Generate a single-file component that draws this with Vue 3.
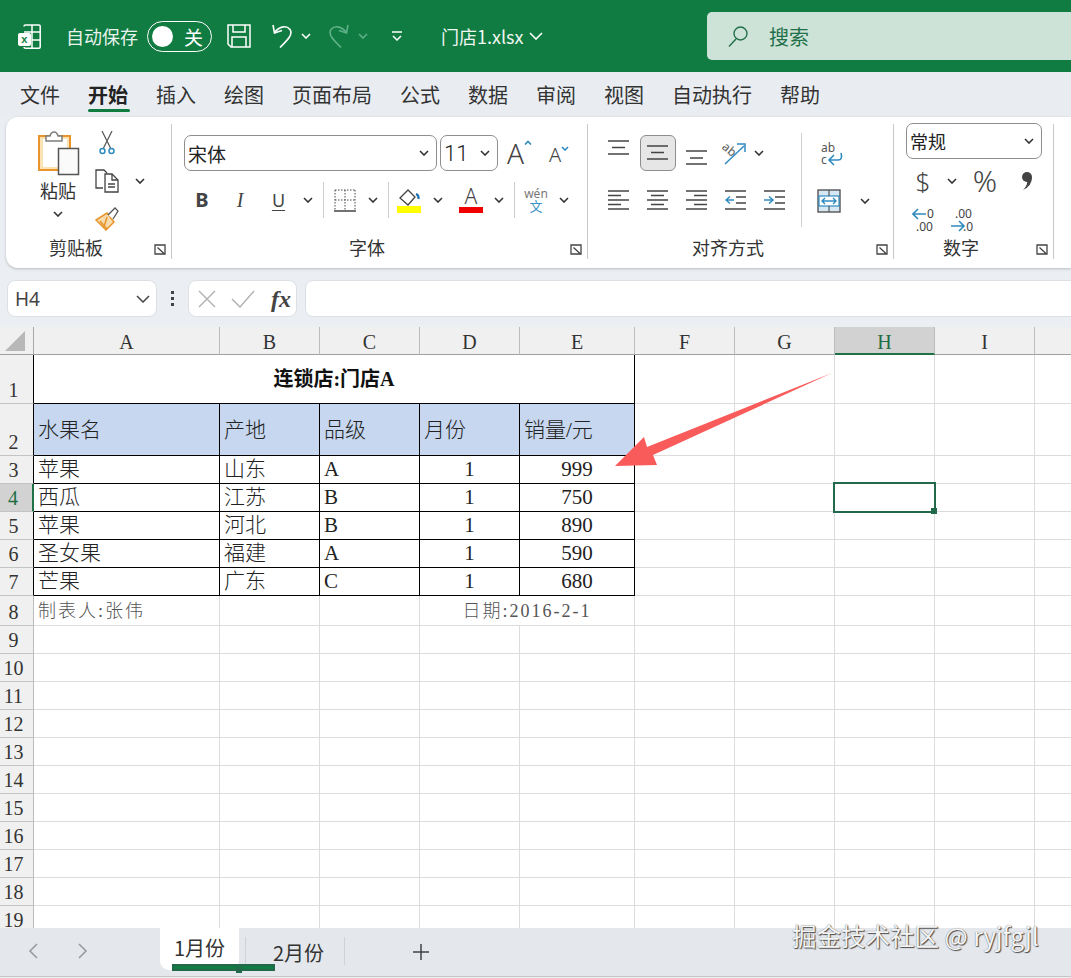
<script setup>
const cols = ['A', 'B', 'C', 'D', 'E', 'F', 'G', 'H', 'I', 'J']
const tabs = ['文件', '开始', '插入', '绘图', '页面布局', '公式', '数据', '审阅', '视图', '自动执行', '帮助']
const blank = (n, active) => Array.from({ length: n }, (_, i) => ({ t: '', c: active && i === 2 ? 'active' : '' }))
const line = (a, b, c, d, e) => [
  { t: a, c: 'b' }, { t: b, c: 'b' }, { t: c, c: 'b' },
  { t: d, c: 'b num' }, { t: e, c: 'b num' }
]
const head = ['水果名', '产地', '品级', '月份', '销量/元'].map(t => ({ t, c: 'b hd' }))
const rows = [
  { n: 1, dark: true, cells: [{ t: '连锁店:门店A', c: 'b title span5' }, ...blank(5)] },
  { n: 2, dark: true, cells: [...head, ...blank(5)] },
  { n: 3, dark: true, cells: [...line('苹果', '山东', 'A', '1', '999'), ...blank(5)] },
  { n: 4, dark: true, sel: true, cells: [...line('西瓜', '江苏', 'B', '1', '750'), ...blank(5, true)] },
  { n: 5, dark: true, cells: [...line('苹果', '河北', 'B', '1', '890'), ...blank(5)] },
  { n: 6, dark: true, cells: [...line('圣女果', '福建', 'A', '1', '590'), ...blank(5)] },
  { n: 7, dark: true, cells: [...line('芒果', '广东', 'C', '1', '680'), ...blank(5)] },
  { n: 8, cells: [{ t: '制表人:张伟', c: 'note' }, { t: '', c: '' }, { t: '', c: '' }, { t: '日期:2016-2-1', c: 'note span2 mid' }, ...blank(5)] },
  ...Array.from({ length: 11 }, (_, i) => ({ n: 9 + i, cells: blank(10) }))
]
</script>

<template>
  <div class="app">
    <header class="titlebar">
      <svg class="logo" viewBox="0 0 23 25" fill="none" stroke="#fff" stroke-width="1.5">
        <path d="M6 2.5Q6 1 7.5 1H21q1.2 0 1.2 1.2V23q0 1.2-1.2 1.2H7.5Q6 24.200 6 23" />
        <path d="M14 1v23M14 8h8M14 16h8M6 8h8" />
        <rect x="0" y="9" width="13" height="13" rx="2" fill="#fff" stroke="none" />
        <text x="3.300" y="19" class="logo-x">x</text>
      </svg>
      <span class="autosave">自动保存</span>
      <div class="toggle"><i class="knob"></i><span>关</span></div>
      <svg class="save" viewBox="0 0 24 24" fill="none" stroke="#fff" stroke-width="1.500">
        <path d="M1 1h22v22H4l-3-3z" /><path d="M6 1v7h12V1M5 23v-10h14v10" />
      </svg>
      <svg class="undo" viewBox="0 0 22 24" fill="none" stroke="#fff" stroke-width="1.600">
        <path d="M2 1l1.500 8L11 6.500" /><path d="M3.500 9C7 3 15 .5 19 5.500c3.500 5-3 11-10 18" />
      </svg>
      <svg class="qchev" viewBox="0 0 10 6" fill="none" stroke="#fff" stroke-width="1.600"><path d="M1 1l4 4 4-4" /></svg>
      <svg class="undo" viewBox="0 0 22 24" fill="none" stroke="#5fb088" stroke-width="1.600">
        <path d="M20 1l-1.500 8L11 6.500" /><path d="M18.500 9C15 3 7 .5 3 5.500c-3.500 5 3 11 10 18" />
      </svg>
      <svg class="qchev" viewBox="0 0 10 6" fill="none" stroke="#5fb088" stroke-width="1.600"><path d="M1 1l4 4 4-4" /></svg>
      <svg class="quick" viewBox="0 0 12 10" fill="none" stroke="#fff" stroke-width="1.500"><path d="M1 1h10M2 5l4 4 4-4" /></svg>
      <span class="fname">门店1.xlsx</span>
      <svg class="fchev" viewBox="0 0 14 8" fill="none" stroke="#fff" stroke-width="1.600"><path d="M1 1l6 6 6-6" /></svg>
      <div class="search">
        <svg viewBox="0 0 20 21" fill="none" stroke="#22704a" stroke-width="1.400"><circle cx="12.500" cy="7.500" r="6.500" /><path d="M8 13L1 20.500" /></svg>
        <span>搜索</span>
      </div>
    </header>

    <nav class="tabs">
      <span v-for="t in tabs" :key="t" class="tab" :class="{ on: t === '开始' }">{{ t }}</span>
    </nav>

    <section class="ribbon">
      <div class="group g-clip">
        <div class="body clip">
          <div class="paste">
            <svg viewBox="0 0 44 46" class="paste-ic">
              <rect x="3" y="6" width="31" height="34" fill="#fbe3b6" stroke="#e8942a" stroke-width="2" />
              <rect x="7" y="9" width="24" height="28" fill="#fff" />
              <path d="M10 11V6h4q1-4 4-4t4 4h4v5z" fill="#fff" stroke="#7d7d7d" stroke-width="1.500" />
              <rect x="22.500" y="18.500" width="20" height="26" fill="#fafafa" stroke="#555" stroke-width="1.500" />
            </svg>
            <span class="paste-t">粘贴</span>
            <svg class="chev" viewBox="0 0 10 6"><path d="M1 1l4 4 4-4" /></svg>
          </div>
          <svg class="ic scissors" viewBox="0 0 16 24" fill="none">
            <path d="M3 0l8.500 17M13 0L4.500 17" stroke="#555" stroke-width="1.200" />
            <circle cx="3.500" cy="20" r="2.500" stroke="#2e8bc0" stroke-width="1.500" /><circle cx="12.500" cy="20" r="2.500" stroke="#2e8bc0" stroke-width="1.500" />
          </svg>
          <i></i>
          <svg class="ic copy" viewBox="0 0 24 24" fill="none" stroke="#444" stroke-width="1.300">
            <path d="M8 19H1V1h8l3 3" /><path d="M10 5h7l6 6v12H10z" fill="#fff" /><path d="M17 5v6h6M13 15h7M13 18h7" />
          </svg>
          <svg class="chev" viewBox="0 0 10 6"><path d="M1 1l4 4 4-4" /></svg>
          <svg class="ic brush" viewBox="0 0 24 24" fill="none">
            <path d="M1 13L12 6l7 9-8 8z" fill="#f6dcae" stroke="#e8942a" stroke-width="1.500" />
            <path d="M5 14l7 8M12 10l-3 10" stroke="#e8942a" stroke-width="1.500" />
            <path d="M13 8l7-7 3 3-5 8" fill="#fff" stroke="#555" stroke-width="1.300" />
          </svg>
          <i></i>
        </div>
        <div class="foot"><span>剪贴板</span><svg class="launch" viewBox="0 0 12 11" fill="none" stroke="#444" stroke-width="1.300"><path d="M11 5V1H1v9h6M3.500 3.500l7 6.500M6 10h5V5" /></svg></div>
      </div>

      <div class="group g-font">
        <div class="body font">
          <div class="fr1">
            <div class="select w-font"><span>宋体</span><svg class="chev" viewBox="0 0 10 6"><path d="M1 1l4 4 4-4" /></svg></div>
            <div class="select w-size"><span class="sz">11</span><svg class="chev" viewBox="0 0 10 6"><path d="M1 1l4 4 4-4" /></svg></div>
            <div class="grow"><span>A</span><svg viewBox="0 0 8 5" fill="none" stroke="#2e8bc0" stroke-width="1.600"><path d="M1 4.500l3-3 3 3" /></svg></div>
            <div class="shrink"><span>A</span><svg viewBox="0 0 8 5" fill="none" stroke="#2e8bc0" stroke-width="1.600"><path d="M1 1l3 3 3-3" /></svg></div>
          </div>
          <div class="fr2">
            <span class="tb b1">B</span>
            <span class="tb i1">I</span>
            <span class="tb u1">U</span>
            <svg class="chev" viewBox="0 0 10 6"><path d="M1 1l4 4 4-4" /></svg>
            <i class="vsep"></i>
            <svg class="bd" viewBox="0 0 22 23" fill="none" stroke="#444" stroke-width="1">
              <path d="M1 1h20M1 1v20M21 1v20M1 11h20M11 1v20" stroke-dasharray="1.500 1.500" /><path d="M0 22h22" stroke-width="1.500" />
            </svg>
            <svg class="chev" viewBox="0 0 10 6"><path d="M1 1l4 4 4-4" /></svg>
            <i class="vsep"></i>
            <svg class="colorbar" viewBox="0 0 24 25" fill="none">
              <path d="M3 10l8-8 7 7-7 8z" stroke="#444" stroke-width="1.300" /><path d="M19 6q3 1 2.500 5" stroke="#1f6fb0" stroke-width="2.200" />
              <rect x="0" y="18" width="24" height="7" fill="#ffff00" />
            </svg>
            <svg class="chev" viewBox="0 0 10 6"><path d="M1 1l4 4 4-4" /></svg>
            <div class="fcolor"><span>A</span><i></i></div>
            <svg class="chev" viewBox="0 0 10 6"><path d="M1 1l4 4 4-4" /></svg>
            <i class="vsep"></i>
            <div class="wen"><span>wén</span><b>文</b></div>
            <svg class="chev" viewBox="0 0 10 6"><path d="M1 1l4 4 4-4" /></svg>
          </div>
        </div>
        <div class="foot"><span>字体</span><svg class="launch" viewBox="0 0 12 11" fill="none" stroke="#444" stroke-width="1.300"><path d="M11 5V1H1v9h6M3.500 3.500l7 6.500M6 10h5V5" /></svg></div>
      </div>

      <div class="group g-align">
        <div class="body align">
          <div class="al-left">
            <div class="ar1">
              <svg class="al" viewBox="0 0 21 36"><path d="M0 6h21M4 12.500h13M0 19h21" /></svg>
              <div class="al-on"><svg class="al" viewBox="0 0 21 36"><path d="M0 11h21M4 17.500h13M0 24h21" /></svg></div>
              <svg class="al" viewBox="0 0 21 36"><path d="M0 16h21M4 23h13M0 29h21" /></svg>
              <svg class="orient" viewBox="0 0 24 24" fill="none">
                <text x="0" y="11" transform="rotate(40 5 8)" class="ab">ab</text>
                <path d="M3 23L22 5" stroke="#2e8bc0" stroke-width="1.500" /><path d="M15 3h8v8" stroke="#2e8bc0" stroke-width="1.500" />
              </svg>
              <svg class="chev" viewBox="0 0 10 6"><path d="M1 1l4 4 4-4" /></svg>
            </div>
            <div class="ar2">
              <svg class="al" viewBox="0 0 21 20"><path d="M0 1h21M0 5.500h13M0 10h21M0 14.500h13M0 19h21" /></svg>
              <svg class="al" viewBox="0 0 21 20"><path d="M0 1h21M4 5.500h13M0 10h21M4 14.500h13M0 19h21" /></svg>
              <svg class="al" viewBox="0 0 21 20"><path d="M0 1h21M8 5.500h13M0 10h21M8 14.500h13M0 19h21" /></svg>
              <svg class="al" viewBox="0 0 21 20"><path d="M0 1h21M11 7h10M11 13h10M0 19h21" /><path class="blue" d="M9 10H1M5 6.500L1 10l4 3.500" /></svg>
              <svg class="al" viewBox="0 0 21 20"><path d="M0 1h21M11 7h10M11 13h10M0 19h21" /><path class="blue" d="M0 10h8M5 6.500L9 10l-4 3.500" /></svg>
            </div>
          </div>
          <i class="vsep tall"></i>
          <div class="al-right">
            <svg class="wrap" viewBox="0 0 24 26" fill="none">
              <text x="1" y="11" class="ab">ab</text><text x="1" y="23" class="ab">c</text>
              <path d="M21 12q2 7-3 7H10M14 14l-5 5 5 5" stroke="#2e8bc0" stroke-width="1.600" />
            </svg>
            <div class="merge-row">
              <svg class="merge" viewBox="0 0 24 24" fill="none">
                <rect x="1" y="1" width="22" height="22" fill="#d6e8f3" stroke="#555" stroke-width="1.400" />
                <rect x="2" y="7" width="20" height="10" fill="#fff" stroke="#2e8bc0" stroke-width="1.200" />
                <path d="M12 1v6M12 17v6" stroke="#555" stroke-width="1.200" />
                <path d="M5 12h14M8 9l-3 3 3 3M16 9l3 3-3 3" stroke="#2e8bc0" stroke-width="1.400" />
              </svg>
              <svg class="chev" viewBox="0 0 10 6"><path d="M1 1l4 4 4-4" /></svg>
            </div>
          </div>
        </div>
        <div class="foot"><span>对齐方式</span><svg class="launch" viewBox="0 0 12 11" fill="none" stroke="#444" stroke-width="1.300"><path d="M11 5V1H1v9h6M3.500 3.500l7 6.500M6 10h5V5" /></svg></div>
      </div>

      <div class="group g-num">
        <div class="body num-g">
          <div class="select w-num"><span>常规</span><svg class="chev" viewBox="0 0 10 6"><path d="M1 1l4 4 4-4" /></svg></div>
          <div class="nr2">
            <span class="dollar">$</span>
            <svg class="chev" viewBox="0 0 10 6"><path d="M1 1l4 4 4-4" /></svg>
            <span class="pct">%</span>
            <svg class="comma" viewBox="0 0 12 20"><circle cx="6" cy="6" r="5" fill="#444" /><path d="M11 6q0 9-9 13 5-5 4-9z" fill="#444" /></svg>
          </div>
          <div class="nr3">
            <svg class="dec" viewBox="0 0 24 25" fill="none">
              <text x="15" y="11" class="d">0</text><text x="4" y="24" class="d">.00</text>
              <path d="M14 7H2M6 2L1 7l5 5" stroke="#2e8bc0" stroke-width="1.600" />
            </svg>
            <svg class="dec" viewBox="0 0 24 25" fill="none">
              <text x="4" y="11" class="d">.00</text><text x="12" y="24" class="d">.0</text>
              <path d="M0 19h13M8 14l5 5-5 5" stroke="#2e8bc0" stroke-width="1.600" />
            </svg>
          </div>
        </div>
        <div class="foot"><span>数字</span><svg class="launch" viewBox="0 0 12 11" fill="none" stroke="#444" stroke-width="1.300"><path d="M11 5V1H1v9h6M3.500 3.500l7 6.500M6 10h5V5" /></svg></div>
      </div>
    </section>

    <div class="formula">
      <div class="namebox"><span>H4</span><svg viewBox="0 0 14 8" fill="none" stroke="#444" stroke-width="1.500"><path d="M1 1l6 6 6-6" /></svg></div>
      <div class="dots"><i></i><i></i><i></i></div>
      <div class="fxbox">
        <svg viewBox="0 0 18 18" class="x1" fill="none" stroke="#b4b4b4" stroke-width="1.500"><path d="M1 1l16 16M17 1L1 17" /></svg>
        <svg viewBox="0 0 24 18" class="c1" fill="none" stroke="#b4b4b4" stroke-width="1.500"><path d="M1 9l8 8L23 1" /></svg>
        <span class="fx">fx</span>
      </div>
      <div class="finput"></div>
    </div>

    <main class="sheetwrap">
      <div class="sheet">
        <div class="corner"><svg viewBox="0 0 21 20"><path d="M20 0v20H0z" fill="#b8b8b8" /></svg></div>
        <div v-for="c in cols" :key="c" class="colh" :class="{ sel: c === 'H' }">{{ c }}</div>
        <template v-for="r in rows" :key="r.n">
          <div class="rowh" :class="{ dark: r.dark, sel: r.sel }">{{ r.n }}</div>
          <div v-for="(cell, i) in r.cells" :key="i" class="cell" :class="cell.c">{{ cell.t }}</div>
        </template>
      </div>
      <svg class="arrow" viewBox="0 327 1071 601">
        <path d="M832 373L653 455 657 465 615 466 644 437 647 447z" fill="#f95b5b" />
      </svg>
    </main>

    <footer class="sheetbar">
      <svg class="nav n1" viewBox="0 0 10 16" fill="none" stroke="#9a9a9a" stroke-width="1.600"><path d="M9 1L2 8l7 7" /></svg>
      <svg class="nav n2" viewBox="0 0 10 16" fill="none" stroke="#9a9a9a" stroke-width="1.600"><path d="M1 1l7 7-7 7" /></svg>
      <div class="stab active"><span>1月份</span></div>
      <i class="ssep"></i>
      <div class="stab"><span>2月份</span></div>
      <i class="ssep"></i>
      <svg class="plus" viewBox="0 0 18 18" fill="none" stroke="#444" stroke-width="1.500"><path d="M9 1v16M1 9h16" /></svg>
    </footer>
    <div class="watermark">掘金技术社区 @ ryjfgjl</div>
  </div>
</template>

<style scoped>
.app { position: relative; width: 1071px; height: 978px; overflow: hidden; display: flex; flex-direction: column; background: #ebeef2; font-family: "Noto Sans CJK SC", "Noto Sans", sans-serif; color: #333; }
.chev { width: 10px; height: 6px; fill: none; stroke: #333; stroke-width: 1.600; justify-self: center; }

.titlebar { height: 72px; flex: none; background: #107c41; color: #fff; display: grid; align-items: center; padding-left: 18px; grid-template-columns: 48px 81px 80px 44px 30px 27px 30px 33px 50px 88px 178px 1fr; }
.titlebar > * { justify-self: start; }
.logo { width: 23px; height: 25px; }
.logo-x { font: bold 11px "Liberation Sans", sans-serif; fill: #107c41; stroke: none; }
.autosave { font-size: 18px; color: #e9f3ee; }
.toggle { width: 65px; height: 31px; box-sizing: border-box; border: 1.500px solid #fff; border-radius: 16px; display: flex; align-items: center; justify-content: space-between; padding: 0 8px 0 4px; font-size: 19px; }
.knob { width: 21px; height: 21px; border-radius: 50%; background: #fff; }
.save { width: 24px; height: 24px; }
.undo { width: 22px; height: 24px; }
.qchev { width: 10px; height: 6px; }
.quick { width: 12px; height: 10px; }
.fname { font-size: 18px; color: #f0f6f2; white-space: nowrap; }
.fchev { width: 14px; height: 8px; }
.search { justify-self: stretch; margin-right: -10px; height: 48px; background: #cee3d7; border-radius: 5px; display: flex; align-items: center; padding-left: 21px; gap: 21px; color: #22704a; font-size: 20px; }
.search svg { width: 20px; height: 21px; }

.tabs { height: 45px; flex: none; background: #e9edf1; display: flex; align-items: center; gap: 28px; padding: 0 0 0 20px; box-sizing: border-box; }
.tab { position: relative; font-size: 20px; line-height: 26px; color: #333; }
.tab.on { font-weight: 700; color: #222; }
.tab.on::after { content: ""; position: absolute; left: 0; right: -2px; top: 27px; height: 3px; background: #107c41; border-radius: 2px; }

.ribbon { height: 151px; flex: none; margin-left: 6px; box-sizing: border-box; padding-top: 7px; background: #fff; border-radius: 12px 0 0 12px; box-shadow: 0 1px 3px rgba(0, 0, 0, .22); display: flex; align-items: flex-start; }
.group { height: 135px; box-sizing: border-box; border-right: 1px solid #c8c8c8; margin-right: 0; display: flex; flex-direction: column; }
.g-clip { width: 166px; }
.g-font { width: 416px; }
.g-align { width: 306px; }
.g-num { width: 160px; }
.body { flex: 1; min-height: 0; }
.foot { height: 24px; display: grid; grid-template-columns: 1fr 12px; column-gap: 8px; padding-right: 5px; align-items: center; font-size: 18px; color: #333; text-align: center; }
.launch { width: 12px; height: 11px; margin-top: 5px; }
.foot span { line-height: 22px; }

.clip { display: grid; grid-template-columns: 56px 42px 24px; grid-template-rows: 38px 38px 38px; padding-left: 24px; align-items: center; justify-items: center; }
.paste { grid-row: 1 / 4; display: flex; flex-direction: column; align-items: center; align-self: start; padding-top: 6px; }
.paste-ic { width: 44px; height: 46px; }
.paste-t { font-size: 18px; line-height: 24px; margin-top: 2px; color: #333; }
.paste .chev { margin-top: 9px; }
.ic { width: 24px; height: 24px; }
.scissors { width: 16px; height: 24px; }

.font { padding: 11px 0 0 12px; }
.fr1 { display: flex; align-items: center; }
.select { height: 36px; box-sizing: border-box; border: 1px solid #8e8e8e; border-radius: 7px; display: flex; align-items: center; justify-content: space-between; padding: 0 7px 0 3px; font-size: 19px; color: #222; flex: none; background: #fff; }
.w-font { width: 253px; }
.w-size { width: 58px; margin-left: 3px; }
.sz { font-size: 22px; font-family: Roboto, sans-serif; font-weight: 300; }
.grow, .shrink { display: flex; color: #444; line-height: 1; align-items: flex-start; }
.grow { margin-left: 9px; font-size: 28px; width: 42px; }
.shrink { font-size: 20px; padding-top: 4px; }
.grow svg, .shrink svg { width: 8px; height: 5px; margin-top: 1px; }
.grow span, .shrink span { font-family: "Noto Sans", sans-serif; font-weight: 300; }
.fr2 { display: grid; grid-template-columns: 38px 38px 39px 20px 11px 32px 24px 6px 36px 22px 44px 12px 18px 26px 30px; height: 36px; margin-top: 11px; margin-left: -1px; align-items: center; justify-items: center; }
.tb { font-size: 20px; color: #444; line-height: 1; }
.b1 { font-weight: 700; font-family: "Noto Sans", sans-serif; }
.i1 { font-family: "Liberation Serif", serif; font-style: italic; }
.u1 { font-family: "Noto Sans", sans-serif; font-size: 18px; text-decoration: underline; text-underline-offset: 3px; }
.vsep { width: 1px; height: 36px; background: #cfcfcf; }
.bd { width: 22px; height: 23px; }
.colorbar { width: 24px; height: 25px; }
.fcolor { width: 24px; display: flex; flex-direction: column; align-items: center; }
.fcolor span { font: 300 21px/18px "Noto Sans", sans-serif; color: #444; }
.fcolor i { width: 24px; height: 6px; background: #f00000; margin-top: 2px; }
.wen { display: flex; flex-direction: column; align-items: center; line-height: 1; }
.wen span { font: 12px/11px "Noto Sans", sans-serif; color: #777; }
.wen b { font-weight: 400; font-size: 13px; line-height: 14px; color: #3d94c8; }

.align { display: flex; padding-left: 11px; }
.al-left { width: 194px; flex: none; padding-top: 11px; }
.ar1 { display: grid; grid-template-columns: 39px 39px 39px 36px 14px; height: 36px; align-items: center; justify-items: center; margin-right: 27px; }
.ar2 { display: grid; grid-template-columns: repeat(5, 39px); height: 20px; margin-top: 19px; align-items: center; justify-items: center; }
.al { width: 21px; height: 36px; fill: none; stroke: #444; stroke-width: 1.300; }
.ar2 .al { height: 20px; }
.al .blue { stroke: #2e8bc0; stroke-width: 1.500; }
.al-on { width: 36px; height: 36px; box-sizing: border-box; border: 1px solid #8e8e8e; border-radius: 6px; background: #e6e6e6; display: flex; align-items: center; justify-content: center; }
.orient { width: 24px; height: 24px; }
.ab { font: 12px "Noto Sans", sans-serif; fill: #555; stroke: none; }
.vsep.tall { height: 94px; margin: 9px 0 0 8px; flex: none; }
.al-right { padding-left: 15px; padding-top: 17px; }
.wrap { width: 24px; height: 26px; display: block; margin-left: 3px; }
.merge-row { display: flex; align-items: center; gap: 19px; margin-top: 22px; }
.merge { width: 24px; height: 24px; }

.num-g { padding-left: 12px; display: flex; flex-direction: column; }
.w-num { width: 136px; margin-top: -1px; font-size: 18px; }
.nr2 { display: grid; grid-template-columns: 34px 24px 42px 42px; justify-items: center; align-items: center; height: 38px; margin: 3px 0 0 0; }
.dollar { font: 300 26px/1 "Noto Sans", sans-serif; color: #444; }
.pct { font: 300 30px/1 "Noto Sans", sans-serif; color: #444; }
.comma { width: 12px; height: 20px; }
.nr3 { display: flex; gap: 15px; margin: 7px 0 0 6px; }
.dec { width: 24px; height: 25px; }
.d { font: 12px "Noto Sans", sans-serif; fill: #444; stroke: none; }

.formula { height: 59px; flex: none; box-sizing: border-box; padding: 12px 0 10px 7px; display: flex; }
.namebox { width: 150px; height: 37px; box-sizing: border-box; background: #fff; border: 1px solid #dcdfe3; border-radius: 8px; display: flex; align-items: center; justify-content: space-between; padding: 0 6px 0 7px; font: 19px "Noto Sans", sans-serif; color: #444; flex: none; }
.namebox svg { width: 14px; height: 8px; }
.dots { width: 31px; flex: none; display: flex; flex-direction: column; align-items: center; justify-content: center; gap: 3px; }
.dots i { width: 3px; height: 3px; background: #444; }
.fxbox { width: 109px; height: 37px; box-sizing: border-box; flex: none; background: #fff; border: 1px solid #dcdfe3; border-radius: 8px; display: flex; align-items: center; padding-left: 9px; }
.x1 { width: 18px; height: 18px; }
.c1 { width: 24px; height: 18px; margin-left: 15px; }
.fx { font: italic 700 24px/1 "Liberation Serif", serif; color: #444; margin-left: 16px; }
.finput { flex: 1; height: 37px; box-sizing: border-box; margin: 0 -10px 0 8px; background: #fff; border: 1px solid #dcdfe3; border-radius: 8px; }

.sheetwrap { position: relative; height: 601px; flex: none; overflow: hidden; background: #fff; }
.sheet { display: grid; grid-template-columns: 34px 186px 100px 100px 100px 115px 100px 100px 100px 100px 100px; grid-template-rows: 28px 49px 52px repeat(5, 28px) 30px repeat(11, 28px); font-family: "Liberation Serif", "Noto Sans CJK SC", serif; }
.corner { background: #f0f0f0; border-right: 1px solid #a8a8a8; border-bottom: 1px solid #a0a0a0; display: flex; justify-content: center; align-items: center; }
.corner svg { width: 21px; height: 20px; margin: 0 3px 0 0; }
.colh { box-sizing: border-box; background: #f0f0f0; border-right: 1px solid #bcbcbc; border-bottom: 1px solid #a0a0a0; font-size: 20px; line-height: 30px; text-align: center; color: #333; }
.colh.sel { background: #d2d2d2; color: #1f6e43; border-bottom: 2px solid #1f7246; }
.rowh { box-sizing: border-box; background: #f0f0f0; border-right: 1px solid #bcbcbc; border-bottom: 1px solid #c4c4c4; font-size: 20px; color: #333; display: flex; align-items: flex-end; justify-content: center; padding-right: 6px; line-height: 26px; }
.rowh.dark { border-right-color: #000; }
.rowh.sel { background: #d2d2d2; color: #1f6e43; border-right: 2px solid #1f7246; }
.cell { box-sizing: border-box; border-right: 1px solid #dcdcdc; border-bottom: 1px solid #dcdcdc; font-size: 21px; line-height: 1; color: #222; padding: 0 4px; display: flex; align-items: center; white-space: nowrap; font-weight: 300; }
.cell.b { border-color: #000; }
.span5 { grid-column: span 5; }
.span2 { grid-column: span 2; }
.title { font-weight: 700; justify-content: center; font-size: 20px; color: #111; }
.hd { background: #c6d7ef; padding-top: 2px; }
.num { justify-content: center; }
.note { font-size: 18px; color: #555; letter-spacing: 2px; }
.mid { justify-content: center; }
.active { position: relative; }
.active::after { content: ""; position: absolute; left: -2px; top: -2px; width: 99px; height: 27px; border: 2px solid #21694a; }
.active::before { content: ""; position: absolute; right: -3px; bottom: -3px; width: 6px; height: 6px; background: #21694a; z-index: 1; }

.arrow { position: absolute; left: 0; top: 0; width: 1071px; height: 601px; pointer-events: none; }

.sheetbar { height: 49px; flex: none; box-sizing: border-box; background: #e4e7ec; border-bottom: 1px solid #c6c6c6; display: flex; padding-left: 28px; align-items: flex-start; }
.nav { width: 10px; height: 16px; margin-top: 15px; flex: none; }
.n2 { margin-left: 40px; margin-right: 72px; }
.stab { height: 42px; font-size: 20px; color: #333; width: 79px; box-sizing: border-box; display: flex; justify-content: center; align-items: center; padding-top: 7px; line-height: 1; }
.stab.active { background: #fff; border-radius: 0 0 9px 9px; padding-top: 0; align-items: flex-start; position: relative; }
.stab.active span { margin-top: 10px; }
.stab.active::after { content: ""; position: absolute; left: 12px; right: 12px; top: 36px; height: 3px; background: #107c41; }
.ssep { width: 1px; height: 28px; background: #cfd2d6; margin: 9px 5px 0 6px; flex: none; }
.stab:not(.active) { margin-left: 8px; }
.plus { width: 18px; height: 18px; margin: 15px 0 0 62px; flex: none; }

.watermark { position: absolute; left: 792px; top: 920px; font-size: 24.500px; line-height: 32px; color: #f4f4f4; white-space: nowrap; text-shadow: 1px 1px 1px #4a4a4a, 0 0 1px #666; }
</style>

<style>
html, body { margin: 0; overflow: hidden; }
</style>
